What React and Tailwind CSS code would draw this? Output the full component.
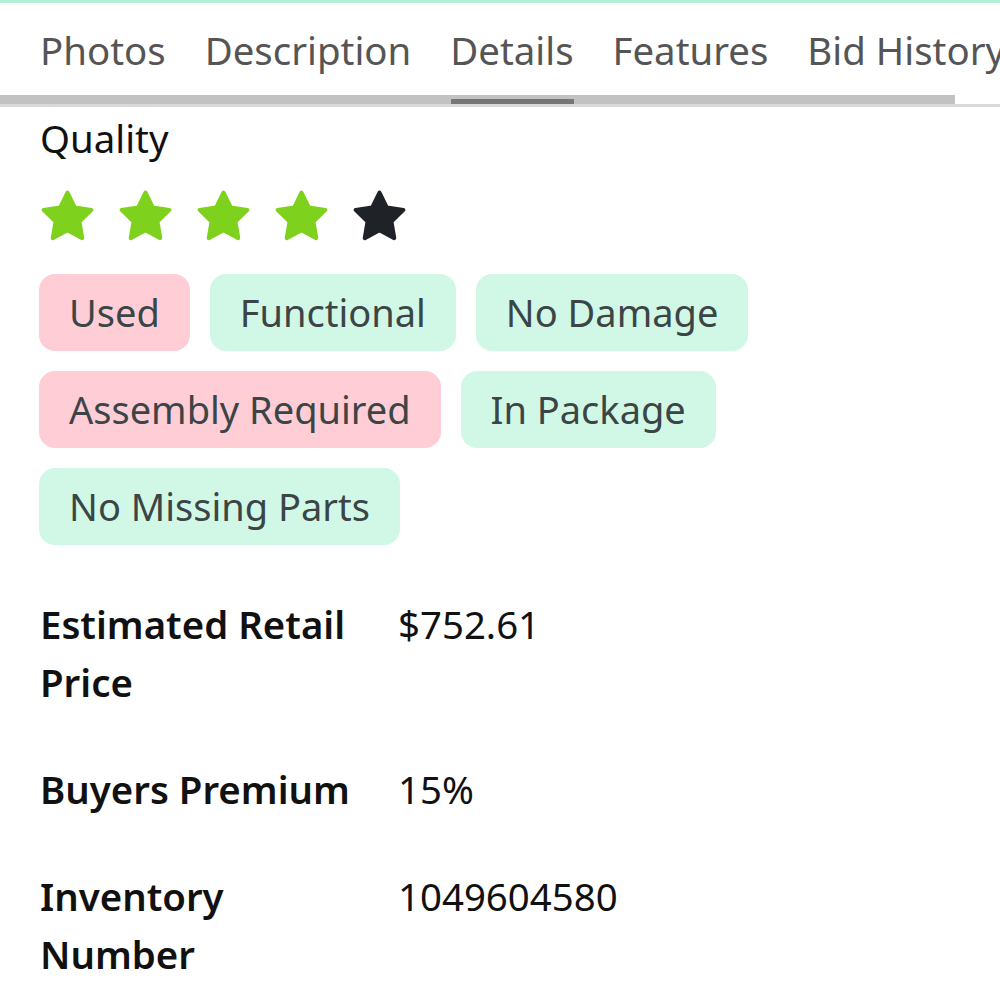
import React from "react";

const tabs = ["Photos", "Description", "Details", "Features", "Bid History"];

const chips = [
    { label: "Used", bad: true },
    { label: "Functional" },
    { label: "No Damage" },
    { label: "Assembly Required", bad: true },
    { label: "In Package" },
    { label: "No Missing Parts" },
];

const details = [
    { label: "Estimated Retail Price", value: "$752.61" },
    { label: "Buyers Premium", value: "15%" },
    { label: "Inventory Number", value: "1049604580" },
];

function Star({ filled }) {
    return (
        <svg viewBox="0 0 24 24" className={`w-[61px] h-[61px] ${filled ? "text-[#7ed11d]" : "text-[#1f2328]"}`}>
            <path
                d="M12 2.6l2.9 5.9 6.5.9-4.7 4.6 1.1 6.5L12 17.4l-5.8 3.1 1.1-6.5-4.7-4.6 6.5-.9z"
                fill="currentColor"
                stroke="currentColor"
                strokeWidth="1.6"
                strokeLinejoin="round"
            />
        </svg>
    );
}

export default function App() {
    return (
        <div className="bg-white min-h-screen overflow-hidden" style={{ fontFamily: "'Noto Sans', sans-serif" }}>
            <div className="h-[3px] bg-[#b4f1d9]"></div>

            <nav className="h-[92px] pt-[4px] flex items-center gap-[39px] pl-[40px] whitespace-nowrap text-[38.4px] text-[#555]">
                {tabs.map((t) => (
                    <span key={t}>{t}</span>
                ))}
            </nav>

            <div className="relative h-[12px]">
                <div className="w-[955px] h-[9px] bg-[#c2c2c2]"></div>
                <div className="h-[3px] bg-[#d9d9d9]"></div>
                <div className="absolute left-[451px] top-[4px] w-[123px] h-[5px] bg-[#767676]"></div>
            </div>

            <main className="px-[40px]">
                <h3 className="mt-[3px] text-[38.4px] leading-[57px] text-[#111]">Quality</h3>

                <div className="mt-[19px] flex gap-[17px] -ml-[3px]">
                    {[1, 2, 3, 4, 5].map((n) => (
                        <Star key={n} filled={n <= 4} />
                    ))}
                </div>

                <div className="mt-[27px] -ml-[1px] flex flex-wrap gap-[20px] max-w-[760px]">
                    {chips.map((c) => (
                        <span
                            key={c.label}
                            className={`px-[30px] py-[10px] rounded-[16px] text-[38px] leading-[57px] text-[#3b4545] ${c.bad ? "bg-[#ffcdd6]" : "bg-[#d1f8e6]"
                                }`}
                        >
                            {c.label}
                        </span>
                    ))}
                </div>

                <div className="mt-[50px] grid grid-cols-[330px_1fr] gap-x-[28px] gap-y-[49px] text-[38.4px] leading-[58px] text-[#111]">
                    {details.map((d) => (
                        <React.Fragment key={d.label}>
                            <div className="font-semibold">{d.label}</div>
                            <div>{d.value}</div>
                        </React.Fragment>
                    ))}
                </div>
            </main>
        </div>
    );
}
